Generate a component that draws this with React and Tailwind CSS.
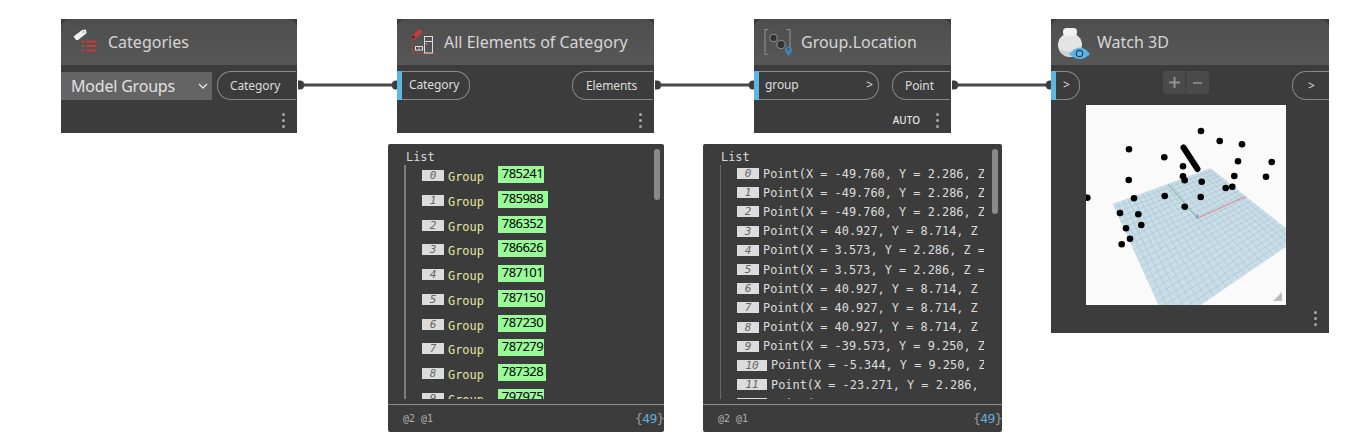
import React from "react";

const ui = { fontFamily: '"Noto Sans", sans-serif' };
const mono = { fontFamily: '"DejaVu Sans Mono", monospace' };

function Dots() {
  return (
    <div className="flex flex-col gap-[3px] w-[3px]">
      <div className="w-[3px] h-[3px] rounded-full bg-[#a8a8a8]" />
      <div className="w-[3px] h-[3px] rounded-full bg-[#a8a8a8]" />
      <div className="w-[3px] h-[3px] rounded-full bg-[#a8a8a8]" />
    </div>
  );
}

function CategoriesIcon() {
  return (
    <svg width="36" height="36" viewBox="0 0 36 36" className="shrink-0">
      <path d="M5.5 12.5 L14.5 5.8 L18 5.8 L18.5 9.2 L10 16 L8 16 Z" fill="#f0f0f0" />
      <circle cx="15.6" cy="8" r="0.8" fill="#777" />
      <g fill="#c63d38">
        <rect x="14" y="16.5" width="2.5" height="2" />
        <rect x="14" y="21" width="2.5" height="2" />
        <rect x="14" y="25.5" width="2.5" height="2" />
        <rect x="18.5" y="16.5" width="10" height="2" />
        <rect x="18.5" y="21" width="10" height="2" />
        <rect x="18.5" y="25.5" width="10" height="2" />
      </g>
    </svg>
  );
}

function ElementsIcon() {
  return (
    <svg width="36" height="36" viewBox="0 0 36 36" className="shrink-0">
      <path d="M7 11.5 L14.5 5 L17.5 8 L10 15.5 L7.5 15 Z" fill="#c63d38" />
      <circle cx="8.5" cy="13" r="1.3" fill="#2c2c2c" />
      <path d="M7.5 15 V29.5 H33" fill="none" stroke="#c63d38" strokeWidth="0.9" strokeDasharray="2 1" />
      <rect x="10.5" y="22.5" width="7" height="3.6" fill="#4a4a4a" stroke="#e0e0e0" strokeWidth="1" />
      <path d="M14 22.5 V26" stroke="#e0e0e0" strokeWidth="0.7" />
      <rect x="19.5" y="12.5" width="8" height="16.5" fill="none" stroke="#dedede" strokeWidth="1" />
      <path d="M19.5 17.5 H27.5" stroke="#dedede" strokeWidth="1" />
      <rect x="21" y="19.5" width="1" height="1" fill="#dedede" />
    </svg>
  );
}

function LocationIcon() {
  return (
    <svg width="40" height="36" viewBox="0 0 40 36" className="shrink-0">
      <path d="M8.5 5.5 H5 V30.5 H8.5" fill="none" stroke="#8a8a8a" strokeWidth="1.2" />
      <path d="M26.5 5.5 H30 V30" fill="none" stroke="#8a8a8a" strokeWidth="1.2" />
      <circle cx="13.5" cy="14" r="3.8" fill="#333" stroke="#9a9a9a" strokeWidth="0.9" />
      <circle cx="21" cy="20.5" r="4.2" fill="#333" stroke="#9a9a9a" strokeWidth="0.9" />
      <path d="M28.5 32 C26.5 29 25 27.6 25 25.4 A3.6 3.6 0 0 1 32 25.4 C32 27.6 30.4 29 28.5 32 Z" fill="#3a87c0" />
      <circle cx="28.5" cy="25.4" r="1.3" fill="#555" />
    </svg>
  );
}

function WatchIcon() {
  return (
    <svg width="36" height="36" viewBox="0 0 36 36" className="shrink-0">
      <circle cx="15" cy="21" r="12" fill="#e4e4e4" />
      <path d="M4 25 A12 12 0 0 0 26 25 Q15 31 4 25 Z" fill="#cfcfcf" />
      <rect x="8" y="4" width="14" height="8" rx="3.5" fill="#f2f2f2" />
      <path d="M14 30 Q25 17 35 30 Q25 40 14 30 Z" fill="#5ab4e8" />
      <circle cx="24.5" cy="29.6" r="3.2" fill="#5ab4e8" stroke="#2f3f4c" strokeWidth="1.1" />
    </svg>
  );
}

function Strip() {
  return <div className="w-[5px] h-[29px] bg-[#5cb6e2] shrink-0" />;
}

function Out({ children, className }) {
  return (
    <div className={"h-[29px] flex items-center border border-r-0 border-[#8a8a8a] rounded-l-[14px] text-[12px] tracking-[-0.1px] text-[#dcdcdc] " + className} style={ui}>
      {children}
    </div>
  );
}

function In({ children, className }) {
  return (
    <div className="flex">
      <Strip />
      <div className={"h-[29px] pb-[2px] flex items-center border border-l-0 border-[#8a8a8a] rounded-r-[14px] text-[12px] tracking-[-0.1px] text-[#dcdcdc] " + className} style={ui}>
        {children}
      </div>
    </div>
  );
}

function Header({ icon, title, className }) {
  return (
    <div className={"h-[46px] flex items-center rounded-t-[9px] bg-gradient-to-b from-[#4e4e4e] to-[#575757] " + className}>
      {icon}
      <span className="text-[16px] text-[#d6d6d6] whitespace-nowrap" style={ui}>{title}</span>
    </div>
  );
}

const groupRows = [
  ["0", "785241", "w-[46px]"],
  ["1", "785988", "w-[50px]"],
  ["2", "786352", "w-[48px]"],
  ["3", "786626", "w-[48px]"],
  ["4", "787101", "w-[46px]"],
  ["5", "787150", "w-[47px]"],
  ["6", "787230", "w-[48px]"],
  ["7", "787279", "w-[46px]"],
  ["8", "787328", "w-[48px]"],
  ["9", "797975", "w-[46px]"],
];

const pointRows = [
  "Point(X = -49.760, Y = 2.286, Z = 0.000)",
  "Point(X = -49.760, Y = 2.286, Z = 0.000)",
  "Point(X = -49.760, Y = 2.286, Z = 0.000)",
  "Point(X = 40.927, Y = 8.714, Z = 0.000)",
  "Point(X = 3.573, Y = 2.286, Z = 0.000)",
  "Point(X = 3.573, Y = 2.286, Z = 0.000)",
  "Point(X = 40.927, Y = 8.714, Z = 0.000)",
  "Point(X = 40.927, Y = 8.714, Z = 0.000)",
  "Point(X = 40.927, Y = 8.714, Z = 0.000)",
  "Point(X = -39.573, Y = 9.250, Z = 0.000)",
  "Point(X = -5.344, Y = 9.250, Z = 0.000)",
  "Point(X = -23.271, Y = 2.286, Z = 0.000)",
  "Point(X = -23.271, Y = 2.286, Z = 0.000)",
];

function Footer() {
  return (
    <div className="h-[28px] border-t border-[#8c8c8c] flex items-center justify-between pl-[15px] shrink-0" style={mono}>
      <span className="text-[10px] text-[#b0b0b0]">@2 @1</span>
      <span className="text-[13px] text-[#9a9a9a] tracking-[-0.6px]">
        {"{"}<span className="text-[#5cb0dc]">49</span>{"}"}
      </span>
    </div>
  );
}

function Index({ n, className }) {
  return (
    <div className={"h-[11px] shrink-0 bg-[#dcdcdc] text-[#666] italic text-[11px] leading-[11px] text-center " + className} style={mono}>
      {n}
    </div>
  );
}

function ListGroup() {
  return (
    <div className="absolute left-[388px] top-[144px] w-[276px] h-[288px] bg-[#3c3c3c] rounded-[2px] flex flex-col">
      <div className="relative h-[260px] shrink-0 overflow-hidden">
        <div className="absolute right-[4px] top-[5px] w-[6px] h-[51px] rounded-[3px] bg-[#8a8a8a]" />
        <div className="h-[255px] flex flex-col overflow-hidden">
          <div className="pl-[18px] pt-[6px] h-[21px] text-[11.9px] leading-[14px] text-[#d8d8d8] shrink-0" style={mono}>List</div>
          <div className="ml-[16px] border-l-2 border-[#7c7c7c] pl-[16px] pt-[1px] flex-1 overflow-hidden">
            {groupRows.map(([n, v, w]) => (
              <div key={n} className="h-[24.75px] flex items-start">
                <Index n={n} className="w-[22px] mt-[4px]" />
                <span className="ml-[4px] mt-[4px] text-[11.9px] leading-[14px] text-[#e6e69c]" style={mono}>Group</span>
                <div className={"ml-[14px] h-[17px] bg-[#98fb98] text-black text-[13px] leading-[14px] pl-[4px] tracking-[-0.55px] " + w} style={ui}>{v}</div>
              </div>
            ))}
          </div>
        </div>
      </div>
      <Footer />
    </div>
  );
}

function ListPoint() {
  return (
    <div className="absolute left-[703px] top-[144px] w-[299px] h-[288px] bg-[#3c3c3c] rounded-[2px] flex flex-col">
      <div className="relative h-[260px] shrink-0 overflow-hidden">
        <div className="absolute right-[4px] top-[5px] w-[6px] h-[65px] rounded-[3px] bg-[#8a8a8a]" />
        <div className="h-[255px] flex flex-col overflow-hidden">
          <div className="pl-[18px] pt-[6px] h-[21px] text-[11.9px] leading-[14px] text-[#d8d8d8] shrink-0" style={mono}>List</div>
          <div className="ml-[17px] border-l border-[#6a6a6a] pl-[16px] flex-1 overflow-hidden w-[264px]">
            <div className="-mt-[1px]">
              {pointRows.map((t, i) => (
                <div key={i} className="h-[19.2px] flex items-center overflow-hidden">
                  <Index n={String(i)} className={i > 9 ? "w-[30px]" : "w-[22px]"} />
                  <span className="ml-[4px] text-[11.9px] leading-[14px] text-[#dcdcdc] whitespace-nowrap" style={mono}>{t}</span>
                </div>
              ))}
            </div>
          </div>
        </div>
      </div>
      <Footer />
    </div>
  );
}

function gridLines() {
  const A = [124.7, 63.3], C = [212.4, 133.2], D = [82.4, 222.2], B = [26.7, 99];
  const lerp = (p, q, t) => [p[0] + (q[0] - p[0]) * t, p[1] + (q[1] - p[1]) * t];
  const out = [];
  const n = 22;
  const warp = (t) => Math.pow(t, 1.12);
  for (let i = 1; i < n; i++) {
    const t = warp(i / n);
    const p1 = lerp(A, C, t), p2 = lerp(B, D, t);
    const q1 = lerp(A, B, t), q2 = lerp(C, D, t);
    out.push(<line key={"a" + i} x1={p1[0]} y1={p1[1]} x2={p2[0]} y2={p2[1]} />);
    out.push(<line key={"b" + i} x1={q1[0]} y1={q1[1]} x2={q2[0]} y2={q2[1]} />);
  }
  return out;
}

const dots = [
  [115, 26], [133.7, 36], [156, 39.3], [43, 44.3], [78.3, 52.3], [152, 56.3], [185.7, 57], [97, 61.3],
  [42.7, 75], [97, 71.3], [98.7, 75.3], [115.7, 76.7], [148.3, 71], [180, 71.7], [146.3, 81.7], [139.7, 83],
  [1.3, 92.7], [48, 93.3], [78.7, 91], [114.7, 92], [98.7, 101.7],
  [34, 108], [52.3, 109.3], [40, 123.3], [55.3, 120], [44, 133.7], [35.7, 139.3],
];

function Scene() {
  return (
    <svg width="200" height="200" viewBox="0 0 200 200" className="block ml-[35px] mt-[5px] bg-[#fafafa]">
      <polygon points="124.7,63.3 212.4,133.2 82.4,222.2 26.7,99" fill="#c8dde8" />
      <g stroke="#9ab3c1" strokeWidth="0.5" opacity="0.8">{gridLines()}</g>
      <line x1="111.3" y1="113.3" x2="159.7" y2="91.3" stroke="#e0737a" strokeWidth="0.9" />
      <line x1="111.3" y1="113.3" x2="82.3" y2="79.3" stroke="#6fae82" strokeWidth="0.9" />
      <line x1="111.3" y1="113.3" x2="111.3" y2="109" stroke="#4d78c8" strokeWidth="0.9" />
      <line x1="97.5" y1="42.5" x2="111.5" y2="64" stroke="#000" strokeWidth="6" strokeLinecap="round" />
      {dots.map(([x, y], i) => <circle key={i} cx={x} cy={y} r="3.3" fill="#000" />)}
      <polygon points="196,187 196,196 187,196" fill="#bdbdbd" />
    </svg>
  );
}

function Wires() {
  const seg = (x1, x2, k) => (
    <g key={k}>
      <path d={`M${x1} 80.5 H${x1 + 2} A4.5 4.5 0 0 1 ${x1 + 2} 89.5 H${x1} Z`} fill="#3c3c3c" />
      <path d={`M${x2} 80.5 H${x2 - 1} A4.5 4.5 0 0 0 ${x2 - 1} 89.5 H${x2} Z`} fill="#3c3c3c" />
      <line x1={x1 + 4} y1="85" x2={x2 - 4} y2="85" stroke="#484848" strokeWidth="3" />
    </g>
  );
  return (
    <svg width="1348" height="442" className="absolute left-0 top-0">
      {seg(298, 397, 1)}
      {seg(655, 754, 2)}
      {seg(952, 1051, 3)}
    </svg>
  );
}

export default function App() {
  return (
    <div className="relative w-[1348px] h-[442px] bg-white overflow-hidden">
      <Wires />

      <div className="absolute left-[61px] top-[19px] w-[236px] h-[114px] bg-[#3c3c3c] flex flex-col">
        <Header className="pl-[7px]" title="Categories" icon={<div className="mr-[4px] flex"><CategoriesIcon /></div>} />
        <div className="flex items-center mt-[6px] h-[29px]">
          <div className="w-[151px] h-[28px] bg-[#646464] flex items-center justify-between pl-[10px] pr-[4px] text-[16px] tracking-[-0.2px] text-[#e0e0e0]" style={ui}>
            <span>Model Groups</span>
            <svg width="10" height="6" viewBox="0 0 10 6"><path d="M1 1 L5 5 L9 1" fill="none" stroke="#e8e8e8" strokeWidth="1.3" /></svg>
          </div>
          <Out className="ml-[5px] w-[79px] pl-[12px]">Category</Out>
        </div>
        <div className="flex justify-end flex-1 pr-[12px] pt-[13px]"><Dots /></div>
      </div>

      <div className="absolute left-[397px] top-[19px] w-[257px] h-[114px] bg-[#3c3c3c] flex flex-col">
        <Header className="pl-[8px]" title="All Elements of Category" icon={<div className="mr-[3px] flex"><ElementsIcon /></div>} />
        <div className="flex items-center justify-between mt-[6px] h-[29px]">
          <In className="w-[68px] pl-[7px]">Category</In>
          <Out className="w-[81px] pl-[13px] mr-[1px]">Elements</Out>
        </div>
        <div className="flex justify-end flex-1 pr-[12px] pt-[13px]"><Dots /></div>
      </div>

      <div className="absolute left-[754px] top-[19px] w-[197px] h-[114px] bg-[#3c3c3c] flex flex-col">
        <Header className="pl-[6px]" title="Group.Location" icon={<div className="mr-[1px] flex"><LocationIcon /></div>} />
        <div className="flex items-center justify-between mt-[6px] h-[29px]">
          <In className="w-[120px] pl-[6px] pr-[5px] justify-between">
            <span>group</span>
            <span>&gt;</span>
          </In>
          <Out className="w-[58px] pl-[12px] mr-[1px]">Point</Out>
        </div>
        <div className="flex justify-end items-start flex-1 pr-[12px] pt-[13px]">
          <span className="text-[10px] font-medium text-[#e8e8e8] mr-[16px]" style={ui}>AUTO</span>
          <Dots />
        </div>
      </div>

      <div className="absolute left-[1051px] top-[19px] w-[278px] h-[314px] bg-[#3c3c3c] flex flex-col">
        <Header className="pl-[4px]" title="Watch 3D" icon={<div className="mr-[6px] flex"><WatchIcon /></div>} />
        <div className="flex items-start justify-between mt-[6px] h-[29px]">
          <In className="w-[24px] pl-[7px]">&gt;</In>
          <div className="flex w-[46px] h-[23px] rounded-[3px] overflow-hidden bg-[#4a4a4a] text-[#929292]">
            <div className="w-[23px] flex items-center justify-center border-r border-[#3c3c3c]">
              <svg width="11" height="11" viewBox="0 0 11 11"><path d="M5.5 0 V11 M0 5.5 H11" stroke="#929292" strokeWidth="2" /></svg>
            </div>
            <div className="w-[23px] flex items-center justify-center">
              <svg width="9" height="2" viewBox="0 0 9 2"><path d="M0 1 H9" stroke="#808080" strokeWidth="2" /></svg>
            </div>
          </div>
          <Out className="w-[37px] pl-[15px]">&gt;</Out>
        </div>
        <Scene />
        <div className="flex justify-end flex-1 pr-[12px] pt-[6px]"><Dots /></div>
      </div>

      <ListGroup />
      <ListPoint />
    </div>
  );
}
